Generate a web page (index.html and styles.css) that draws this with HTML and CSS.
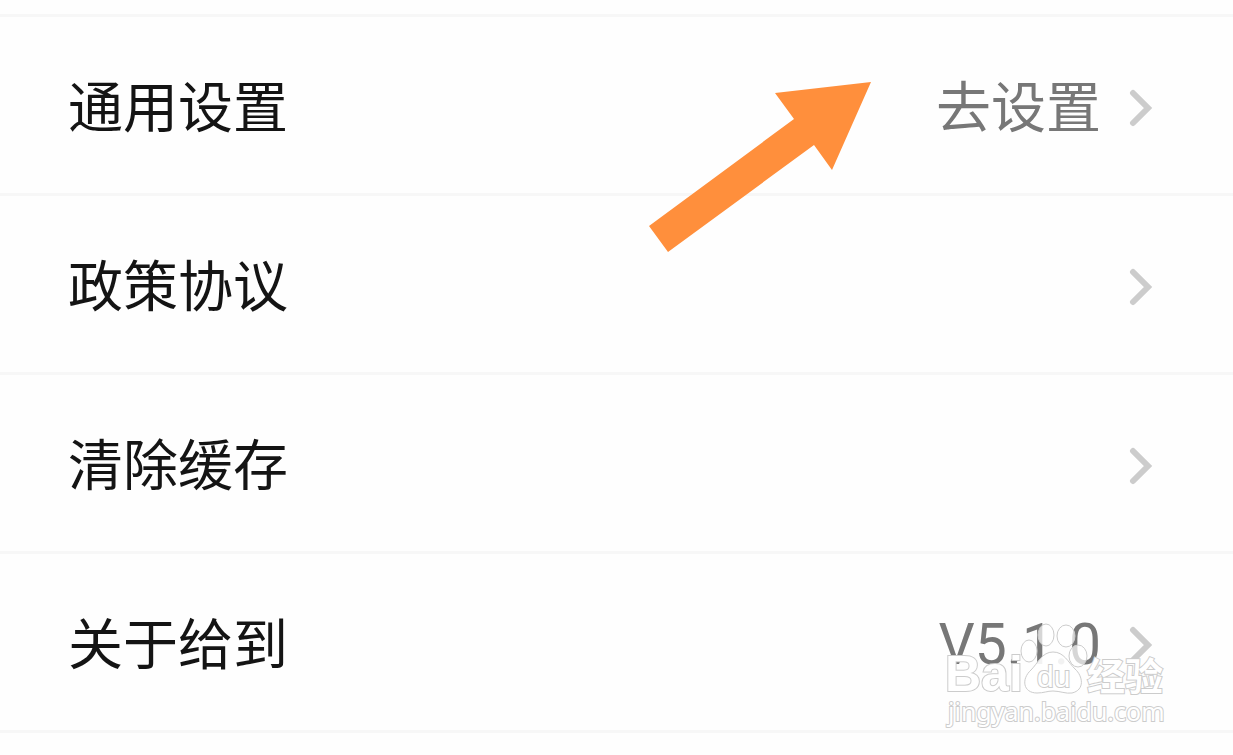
FILE: index.html
```html
<!DOCTYPE html>
<html lang="zh-CN">
<head>
    <meta charset="UTF-8">
    <meta name="viewport" content="width=device-width, initial-scale=1.0">
    <title>设置</title>
    <link rel="stylesheet" href="styles.css">
</head>
<body>
    <main class="settings">
        <!-- Settings rows -->
        <ul class="settings-list">
            <li>
                <a class="row" href="#general">
                    <span class="row-label">通用设置</span>
                    <span class="row-value">去设置</span>
                    <svg class="chevron" viewBox="0 0 24 40" aria-hidden="true"><path d="M4 5 L19 20 L4 35"/></svg>
                </a>
            </li>
            <li>
                <a class="row" href="#policy">
                    <span class="row-label">政策协议</span>
                    <svg class="chevron" viewBox="0 0 24 40" aria-hidden="true"><path d="M4 5 L19 20 L4 35"/></svg>
                </a>
            </li>
            <li>
                <a class="row" href="#cache">
                    <span class="row-label">清除缓存</span>
                    <svg class="chevron" viewBox="0 0 24 40" aria-hidden="true"><path d="M4 5 L19 20 L4 35"/></svg>
                </a>
            </li>
            <li>
                <a class="row" href="#about">
                    <span class="row-label">关于给到</span>
                    <span class="row-value version">V5.1.0</span>
                    <svg class="chevron" viewBox="0 0 24 40" aria-hidden="true"><path d="M4 5 L19 20 L4 35"/></svg>
                </a>
            </li>
        </ul>

        <!-- Arrow pointing at the first row -->
        <svg class="arrow" viewBox="0 0 224 172" aria-hidden="true">
            <path d="M223 1 L184 89 L166 64 L20 171 L1 145 L146 38 L127 12 Z"/>
        </svg>

        <!-- Watermark -->
        <svg class="watermark" viewBox="0 0 230 110" role="img" aria-label="Baidu 经验">
            <text class="mark-name" x="5" y="70">Bai</text>
            <g class="paw">
                <ellipse cx="89" cy="30" rx="8" ry="11"/>
                <ellipse cx="106" cy="14" rx="8" ry="11"/>
                <ellipse cx="126" cy="15" rx="9" ry="11"/>
                <ellipse cx="138" cy="35" rx="9" ry="11"/>
                <path class="paw-pad" d="M113 31 C102 31 98 42 91 49 C81 58 83 72 97 72 C104 72 107 70 113 70 C120 70 126 73 132 72 C145 69 143 55 135 48 C128 41 124 31 113 31 Z"/>
            </g>
            <text class="mark-du" x="97" y="66">du</text>
            <text class="mark-cn" x="147" y="69">经验</text>
            <text class="mark-url" x="8" y="100">jingyan.baidu.com</text>
        </svg>
    </main>
</body>
</html>
```
FILE: styles.css
```css
body {
    margin: 0;
    background-color: #fefefe;
    font-family: Roboto, "Noto Sans CJK SC", sans-serif;
}

.settings {
    position: relative; /* the arrow and watermark sit over the list */
    padding-top: 14px;
}

.settings-list {
    margin: 0;
    padding: 0;
    list-style: none;
    border-top: 3px solid #f7f7f7;
}

/* One line of the list */
.row {
    display: flex;
    align-items: center;
    height: 171px;
    padding: 5px 80px 0 68px;
    border-bottom: 3px solid #f7f7f7;
    color: #141414;
    font-size: 55px;
    line-height: 80px;
    text-decoration: none;
}

.row-label {
    flex: 1;
}

.row-value {
    margin-right: 28px;
    color: #777;
}

.version {
    font-size: 57px;
}

.chevron {
    width: 24px;
    height: 40px;
    fill: none;
    stroke: #ccc;
    stroke-width: 6;
    stroke-linecap: round;
}

.arrow {
    position: absolute;
    top: 81px;
    right: 361px;
    width: 224px;
    height: 172px;
    fill: #ff8f3c;
}

/* Watermark in the bottom corner */
.watermark {
    position: absolute;
    top: 621px;
    right: 63px;
    width: 230px;
    height: 110px;
    fill: #fff;
    stroke: #ccc;
    stroke-width: 1;
}

.watermark text {
    paint-order: stroke;
    stroke-width: 2;
}

.mark-name {
    font-family: "Liberation Sans", Arial, sans-serif;
    font-size: 50px;
    font-weight: bold;
}

.paw ellipse {
    fill: rgba(255, 255, 255, 0.7);
}

.paw-pad {
    fill: rgba(255, 255, 255, 0.9);
}

.mark-du {
    font-family: "Liberation Sans", Arial, sans-serif;
    font-size: 30px;
}

.mark-cn {
    font-family: "Noto Sans CJK SC", sans-serif;
    font-size: 38px;
    font-weight: bold;
}

.mark-url {
    font-family: "Noto Sans", sans-serif;
    font-size: 25px;
}
```
